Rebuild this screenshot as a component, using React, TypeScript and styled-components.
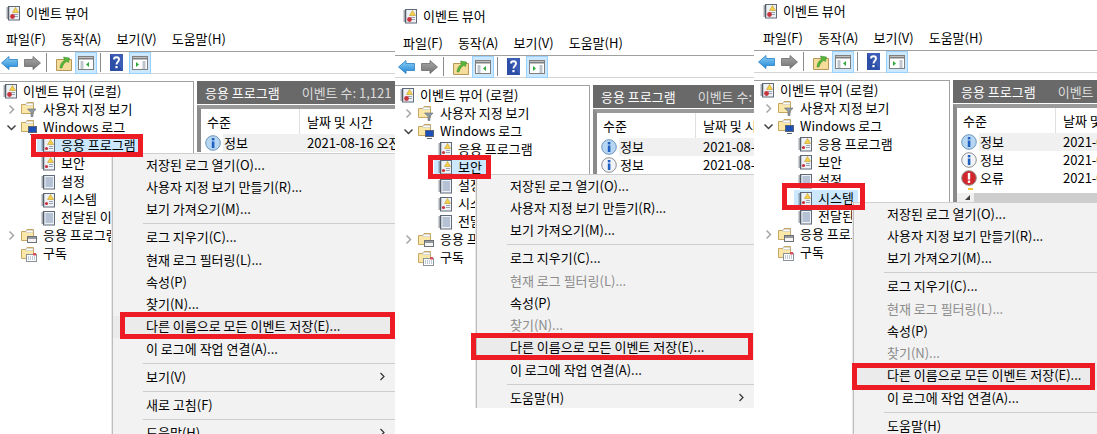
import styled, { createGlobalStyle } from 'styled-components'

const GlobalStyle = createGlobalStyle`
  html, body {
    margin: 0;
    padding: 0;
    background: #fff;
    color: #000;
    font-family: "Noto Sans CJK KR", "Noto Sans", sans-serif;
    font-size: 13px;
  }
`

const Page = styled.div`
  display: flex;
  width: 1097px;
  height: 434px;
  overflow: hidden;
`

const Panel = styled.section<{ $width: number; $height: number }>`
  position: relative;
  flex: none;
  width: ${(p) => p.$width}px;
  height: ${(p) => p.$height}px;
  overflow: hidden;
  background: #fff;
`

const TitleBar = styled.div<{ $height: number; $shift: number; $inset: number }>`
  display: flex;
  align-items: center;
  gap: 5px;
  box-sizing: border-box;
  height: ${(p) => p.$height}px;
  padding-left: ${(p) => p.$inset + 3}px;
  padding-top: ${(p) => Math.max(p.$shift, 0)}px;
  padding-bottom: ${(p) => Math.max(-p.$shift, 0)}px;
  line-height: 16px;
`

const MenuBar = styled.div<{ $inset: number }>`
  display: flex;
  align-items: center;
  gap: 15px;
  height: 25px;
  padding-left: ${(p) => p.$inset + 4}px;
`

const Toolbar = styled.div<{ $inset: number; $gap: number }>`
  display: flex;
  align-items: center;
  box-sizing: border-box;
  height: 23px;
  margin-bottom: ${(p) => p.$gap}px;
  padding-left: ${(p) => p.$inset - 1}px;
  border-top: 1px solid #a0a0a0;
  border-bottom: 1px solid #d4d4d4;
`

const ToolDivider = styled.span<{ $left: number }>`
  width: 1px;
  height: 19px;
  margin-left: ${(p) => p.$left}px;
  background: #8c8c8c;
`

const ToolToggle = styled.span`
  display: flex;
  align-items: center;
  justify-content: center;
  box-sizing: border-box;
  width: 22px;
  height: 22px;
  margin: 0 3px;
  background: #cce8ff;
  border: 1px solid #99d1ff;
`

const Glyph = styled.svg<{ $left?: number; $right?: number }>`
  display: block;
  flex: none;
  margin-left: ${(p) => p.$left ?? 0}px;
  margin-right: ${(p) => p.$right ?? 0}px;
`

const Body = styled.div`
  display: flex;
  align-items: flex-start;
`

const TreePane = styled.div<{ $width: number; $inset: number; $gap: number }>`
  flex: none;
  box-sizing: border-box;
  width: ${(p) => p.$width}px;
  height: 360px;
  margin-right: ${(p) => p.$gap}px;
  padding-left: ${(p) => p.$inset}px;
  overflow: hidden;
  border-top: 1px solid #a0a0a0;
  border-right: 1px solid #a0a0a0;
`

const TreeRow = styled.div<{ $depth: number }>`
  display: flex;
  align-items: center;
  height: 18.1px;
  padding-left: ${(p) => [0, 18, 38][p.$depth]}px;
  white-space: nowrap;
`

const Expander = styled.span`
  display: flex;
  flex: none;
  width: 12px;
  margin-left: -14px;
  margin-right: 2px;
`

const TreeLabel = styled.span<{ $selected: boolean }>`
  display: flex;
  align-items: center;
  gap: 5px;
  height: 18px;
  margin-left: -3px;
  padding: 0 4px 0 3px;
  background: ${(p) => (p.$selected ? '#cce8ff' : 'transparent')};
`

const TreeText = styled.span`
  margin-top: -2px;
`

const ListPane = styled.div`
  flex: 1;
  min-width: 0;
  overflow: hidden;
`

const PaneHeader = styled.div`
  display: flex;
  gap: 22px;
  align-items: center;
  height: 23px;
  margin-bottom: 1px;
  padding-left: 8px;
  background: #696969;
  color: #fff;
  white-space: nowrap;
`

const EventCount = styled.span`
  color: #dcdcdc;
`

const ListFrame = styled.div`
  border-top: 4px solid #9a9a9a;
  border-left: 4px solid #8a8a8a;
  background: #fff;
`

const ListColumns = styled.div`
  display: grid;
  grid-template-columns: 99px 1fr;
  white-space: nowrap;
  overflow: hidden;
`

const HeadCell = styled.div<{ $first?: boolean }>`
  display: flex;
  align-items: center;
  height: 25px;
  padding-left: ${(p) => (p.$first ? 6 : 7)}px;
  box-sizing: border-box;
  border-right: ${(p) => (p.$first ? '1px solid #e0e0e0' : 'none')};
`

const LevelCell = styled.div`
  display: flex;
  align-items: center;
  gap: 2px;
  height: 18.2px;
  padding-left: 4px;
`

const LevelText = styled.span<{ $selected: boolean }>`
  flex: 1;
  padding-left: 1px;
  line-height: 18px;
  background: ${(p) => (p.$selected ? '#f0f0f0' : 'transparent')};
`

const DateCell = styled.div<{ $selected: boolean }>`
  height: 18.2px;
  padding-left: 7px;
  line-height: 18px;
  background: ${(p) => (p.$selected ? '#f0f0f0' : 'transparent')};
`

const PartialRow = styled.div`
  height: 5px;
`

const RowSpeck = styled.span`
  display: block;
  width: 5px;
  height: 2px;
  margin-left: 11px;
  background: #f2c230;
`

const ScrollTrack = styled.div`
  display: flex;
  align-items: center;
  height: 9px;
  padding-left: 7px;
  background: linear-gradient(to right, #f0f0f0 17px, #cdcdcd 17px);
`

const ContextMenu = styled.div<{ $x: number; $y: number; $width: number }>`
  position: absolute;
  left: ${(p) => p.$x}px;
  top: ${(p) => p.$y}px;
  box-sizing: border-box;
  width: ${(p) => p.$width}px;
  background: #f2f2f2;
  border-left: 1px solid #bdbdbd;
  border-top: 1px solid #cfcfcf;
  box-shadow: -1px 0 0 #e8e8e8;
`

const MenuRow = styled.div<{ $disabled?: boolean; $hot?: boolean }>`
  display: flex;
  align-items: center;
  justify-content: space-between;
  box-sizing: border-box;
  height: 22.25px;
  padding: 0 9px 2px 33px;
  color: ${(p) => (p.$disabled ? '#8c8c8c' : '#000')};
  background: ${(p) => (p.$hot ? '#ebebeb' : 'transparent')};
  white-space: nowrap;
`

const MenuSeparator = styled.div`
  height: 1px;
  margin: 2.5px 0 2.5px 30px;
  background: #cdcdcd;
`

const RedBox = styled.div<{ $x: number; $y: number; $w: number; $h: number }>`
  position: absolute;
  left: ${(p) => p.$x}px;
  top: ${(p) => p.$y}px;
  box-sizing: border-box;
  width: ${(p) => p.$w}px;
  height: ${(p) => p.$h}px;
  border: 5px solid #ed1c24;
`

/* icons */

const LogIcon = ({ alert = true, root = false }: { alert?: boolean; root?: boolean }) => (
  <Glyph width="16" height="16" viewBox="0 0 16 16">
    <rect x="3.5" y="1.5" width="11" height="13.5" fill="#eef1f6" stroke="#5f6977" />
    {[3, 5, 7, 9, 11, 13].map((y) => (
      <path key={y} d={`M1.5 ${y}H4.5`} stroke="#48525f" strokeWidth="1" />
    ))}
    {alert ? (
      <>
        <path d="M10.5 2.5L13.5 7.5H7.5Z" fill="#f6d24a" stroke="#bd9a2a" strokeWidth="0.6" />
        <path d="M9 9.5H13M9 11.5H13" stroke="#99a4b2" />
        <circle cx={root ? 7.5 : 6.5} cy="11.5" r={root ? 2.4 : 1.6} fill="#c8343c" />
      </>
    ) : (
      <path d="M5.5 4H13M5.5 6H13M5.5 8H13M5.5 10H13M5.5 12H13" stroke="#7d93b3" />
    )}
  </Glyph>
)

const Folder = ({ badge }: { badge: 'filter' | 'monitor' | 'window' | 'calendar' }) => (
  <Glyph width="18" height="16" viewBox="0 0 18 16">
    <path d="M1.5 3.5H6L7 1.5H13.5V12.5H1.5Z" fill="#fbe7a8" stroke="#c6a660" />
    <rect x="6" y="2.5" width="7" height="2" fill="#fff" stroke="#b8bcc2" strokeWidth="0.5" />
    {badge === 'filter' && <path d="M7.5 8H16L13 11.5V15.5H11V11.5Z" fill="#8f9aa6" stroke="#626c77" strokeWidth="0.6" />}
    {badge === 'monitor' && (
      <>
        <rect x="8.5" y="7.5" width="8" height="6" fill="#1d4fb8" stroke="#5a6473" />
        <path d="M10 15.5H15" stroke="#5a6473" />
      </>
    )}
    {badge === 'window' && (
      <>
        <rect x="7.5" y="8.5" width="9" height="6" fill="#f4f4f4" stroke="#6c7178" />
        <path d="M7.5 10H16.5" stroke="#6c7178" strokeWidth="1.4" />
      </>
    )}
    {badge === 'calendar' && (
      <>
        <rect x="6.5" y="8.5" width="10" height="7" fill="#fff" stroke="#8a929c" />
        <path d="M8 11H15M8 13H15" stroke="#7f94b0" strokeDasharray="1 1" />
        <rect x="13" y="7" width="3" height="2.5" fill="#d8505a" />
      </>
    )}
  </Glyph>
)

const Chevron = ({ open }: { open: boolean }) => (
  <svg width="11" height="11" viewBox="0 0 11 11">
    {open ? (
      <path d="M1.5 3.5L5.5 7.5L9.5 3.5" fill="none" stroke="#404040" strokeWidth="1.5" />
    ) : (
      <path d="M3.5 1.5L7.5 5.5L3.5 9.5" fill="none" stroke="#a6a6a6" strokeWidth="1.5" />
    )}
  </svg>
)

const NavArrow = ({ back, left }: { back: boolean; left?: number }) => (
  <Glyph width="17" height="16" viewBox="0 0 17 16" $left={left}>
    <defs>
      <linearGradient id="navBlue" x1="0" y1="0" x2="0" y2="1">
        <stop offset="0" stopColor="#8fd0f5" />
        <stop offset="1" stopColor="#1f86d6" />
      </linearGradient>
      <linearGradient id="navGrey" x1="0" y1="0" x2="0" y2="1">
        <stop offset="0" stopColor="#a8a8a8" />
        <stop offset="1" stopColor="#737373" />
      </linearGradient>
    </defs>
    {back ? (
      <path d="M0.5 8L8 1.5V4.5H16.5V11.5H8V14.5Z" fill="url(#navBlue)" stroke="#2a7fc4" strokeWidth="0.8" />
    ) : (
      <path d="M16.5 8L9 1.5V4.5H0.5V11.5H9V14.5Z" fill="url(#navGrey)" stroke="#6b6b6b" strokeWidth="0.8" />
    )}
  </Glyph>
)

const FolderUp = () => (
  <Glyph width="16" height="18" viewBox="0 0 16 18" $left={9}>
    <path d="M0.5 5.5H15.5V16.5H0.5Z" fill="#f6dc9a" stroke="#b5975a" />
    <path d="M4 14C4.5 9.5 6 7.5 8.5 6.5L7.5 3L13.5 4L12.5 8.5L10.8 7.4C8.5 8.5 7 10.5 6 14Z" fill="#58b53c" stroke="#3c8a26" strokeWidth="0.5" />
  </Glyph>
)

const HelpIcon = () => (
  <Glyph width="13" height="17" viewBox="0 0 13 17" $left={9} $right={3}>
    <rect width="13" height="17" fill="#2c4ea6" />
    <path d="M0 0H13V17Z" fill="#4a6cc6" opacity="0.5" />
    <path d="M4 5.5C4 2.5 9 2.5 9 5.5C9 8 6.5 7.8 6.5 10.5" fill="none" stroke="#fff" strokeWidth="1.9" />
    <rect x="5.4" y="12" width="2.2" height="2.2" fill="#fff" />
  </Glyph>
)

const PaneIcon = ({ left }: { left: boolean }) => (
  <svg width="16" height="14" viewBox="0 0 16 14">
    <rect x="0.5" y="0.5" width="15" height="13" fill="#fff" stroke="#7f7f7f" />
    <path d="M1 2.5H15" stroke="#7f7f7f" strokeWidth="2" />
    {left ? (
      <>
        <path d="M2.5 6H5.5M2.5 8H5.5M2.5 10H5.5M2.5 12H5.5" stroke="#7f8b9a" />
        <path d="M11 6V11L8 8.5Z" fill="#2fa83a" />
      </>
    ) : (
      <>
        <path d="M10.5 6H13.5M10.5 8H13.5M10.5 10H13.5M10.5 12H13.5" stroke="#7f8b9a" />
        <path d="M4 6V11L7 8.5Z" fill="#2fa83a" />
      </>
    )}
  </svg>
)

const LevelIcon = ({ kind }: { kind: 'infoSel' | 'info' | 'error' }) => {
  if (kind === 'error') {
    return (
      <Glyph width="16" height="16" viewBox="0 0 16 16">
        <circle cx="8" cy="8" r="7.3" fill="#d0262c" stroke="#8f8f8f" />
        <rect x="6.8" y="3" width="2.4" height="6.5" fill="#fff" />
        <rect x="6.8" y="10.5" width="2.4" height="2.4" fill="#fff" />
      </Glyph>
    )
  }
  return (
    <Glyph width="16" height="16" viewBox="0 0 16 16">
      <circle
        cx="8"
        cy="8"
        r="7.3"
        fill={kind === 'infoSel' ? '#b6d6f2' : '#f0f3f7'}
        stroke={kind === 'infoSel' ? '#6f96bd' : '#8f8f8f'}
      />
      <rect x="6.8" y="6.5" width="2.6" height="6.5" fill="#1f5fc0" />
      <rect x="6.8" y="3" width="2.6" height="2.4" fill="#1f5fc0" />
    </Glyph>
  )
}

/* data */

type TreeItem = {
  label: string
  depth: number
  kind: 'root' | 'log' | 'plain' | 'filter' | 'monitor' | 'window' | 'calendar'
  chevron?: 'open' | 'closed'
}

const treeItems: TreeItem[] = [
  { label: '이벤트 뷰어 (로컬)', depth: 0, kind: 'root' },
  { label: '사용자 지정 보기', depth: 1, kind: 'filter', chevron: 'closed' },
  { label: 'Windows 로그', depth: 1, kind: 'monitor', chevron: 'open' },
  { label: '응용 프로그램', depth: 2, kind: 'log' },
  { label: '보안', depth: 2, kind: 'log' },
  { label: '설정', depth: 2, kind: 'plain' },
  { label: '시스템', depth: 2, kind: 'log' },
  { label: '전달된 이벤트', depth: 2, kind: 'plain' },
  { label: '응용 프로그램 및 서비스 로그', depth: 1, kind: 'window', chevron: 'closed' },
  { label: '구독', depth: 1, kind: 'calendar' },
]

type MenuEntry = { label: string; disabled?: boolean; hot?: boolean; arrow?: boolean } | 'sep'

const menuEntries = (limited: boolean, tail: MenuEntry[]): MenuEntry[] => [
  { label: '저장된 로그 열기(O)...' },
  { label: '사용자 지정 보기 만들기(R)...' },
  { label: '보기 가져오기(M)...' },
  'sep',
  { label: '로그 지우기(C)...' },
  { label: '현재 로그 필터링(L)...', disabled: limited },
  { label: '속성(P)' },
  { label: '찾기(N)...', disabled: limited },
  { label: '다른 이름으로 모든 이벤트 저장(E)...', hot: true },
  { label: '이 로그에 작업 연결(A)...' },
  'sep',
  ...tail,
]

type Rect = { x: number; y: number; w: number; h: number }

type PanelConfig = {
  width: number
  height: number
  inset: number
  titleHeight: number
  titleShift: number
  toolGap: number
  treeWidth: number
  paneGap: number
  selected: number
  rows: ('infoSel' | 'info' | 'error')[]
  labels: string[]
  scroll?: boolean
  menu: { x: number; y: number; width: number; entries: MenuEntry[] }
  boxes: Rect[]
}

const panels: PanelConfig[] = [
  {
    width: 395,
    height: 434,
    inset: 2,
    titleHeight: 26,
    titleShift: 0,
    toolGap: 7,
    treeWidth: 194,
    paneGap: 3,
    selected: 3,
    rows: ['infoSel'],
    labels: ['정보'],
    menu: {
      x: 112,
      y: 153,
      width: 283,
      entries: menuEntries(false, [
        { label: '보기(V)', arrow: true },
        'sep',
        { label: '새로 고침(F)' },
        'sep',
        { label: '도움말(H)', arrow: true },
      ]),
    },
    boxes: [
      { x: 31, y: 134, w: 112, h: 23 },
      { x: 120, y: 312, w: 275, h: 27 },
    ],
  },
  {
    width: 359,
    height: 408,
    inset: 4,
    titleHeight: 30,
    titleShift: 2,
    toolGap: 7,
    treeWidth: 195,
    paneGap: 3,
    selected: 4,
    rows: ['infoSel', 'info'],
    labels: ['정보', '정보'],
    menu: {
      x: 81,
      y: 174,
      width: 278,
      entries: menuEntries(true, [{ label: '도움말(H)', arrow: true }]),
    },
    boxes: [
      { x: 33, y: 155, w: 63, h: 24 },
      { x: 76, y: 333, w: 282, h: 27 },
    ],
  },
  {
    width: 343,
    height: 434,
    inset: 5,
    titleHeight: 25,
    titleShift: -3,
    toolGap: 7,
    treeWidth: 196,
    paneGap: 3,
    selected: 6,
    rows: ['infoSel', 'info', 'error'],
    labels: ['정보', '정보', '오류'],
    scroll: true,
    menu: {
      x: 99,
      y: 202,
      width: 270,
      entries: menuEntries(true, [{ label: '도움말(H)' }]),
    },
    boxes: [
      { x: 28, y: 183, w: 83, h: 27 },
      { x: 98, y: 363, w: 243, h: 27 },
    ],
  },
]

const TreeNodeIcon = ({ kind }: { kind: TreeItem['kind'] }) => {
  if (kind === 'root') return <LogIcon root />
  if (kind === 'log') return <LogIcon />
  if (kind === 'plain') return <LogIcon alert={false} />
  return <Folder badge={kind} />
}

const LevelRow = ({ kind, label }: { kind: 'infoSel' | 'info' | 'error'; label: string }) => (
  <>
    <LevelCell>
      <LevelIcon kind={kind} />
      <LevelText $selected={kind === 'infoSel'}>{label}</LevelText>
    </LevelCell>
    <DateCell $selected={kind === 'infoSel'}>2021-08-16 오전 10:23:41</DateCell>
  </>
)

const ViewerPanel = ({ config }: { config: PanelConfig }) => (
  <Panel $width={config.width} $height={config.height}>
    <TitleBar $height={config.titleHeight} $shift={config.titleShift} $inset={config.inset}>
      <LogIcon root />
      <span>이벤트 뷰어</span>
    </TitleBar>
    <MenuBar $inset={config.inset}>
      <span>파일(F)</span>
      <span>동작(A)</span>
      <span>보기(V)</span>
      <span>도움말(H)</span>
    </MenuBar>
    <Toolbar $inset={config.inset} $gap={config.toolGap}>
      <NavArrow back />
      <NavArrow back={false} left={6} />
      <ToolDivider $left={5} />
      <FolderUp />
      <ToolToggle>
        <PaneIcon left />
      </ToolToggle>
      <ToolDivider $left={0} />
      <HelpIcon />
      <ToolToggle>
        <PaneIcon left={false} />
      </ToolToggle>
    </Toolbar>
    <Body>
      <TreePane $width={config.treeWidth} $inset={config.inset} $gap={config.paneGap}>
        {treeItems.map((item, i) => (
          <TreeRow key={item.label} $depth={item.depth}>
            {item.chevron && (
              <Expander>
                <Chevron open={item.chevron === 'open'} />
              </Expander>
            )}
            <TreeLabel $selected={i === config.selected}>
              <TreeNodeIcon kind={item.kind} />
              <TreeText>{item.label}</TreeText>
            </TreeLabel>
          </TreeRow>
        ))}
      </TreePane>
      <ListPane>
        <PaneHeader>
          <span>응용 프로그램</span>
          <EventCount>이벤트 수: 1,121</EventCount>
        </PaneHeader>
        <ListFrame>
          <ListColumns>
            <HeadCell $first>수준</HeadCell>
            <HeadCell>날짜 및 시간</HeadCell>
            {config.rows.map((kind, i) => (
              <LevelRow key={i} kind={kind} label={config.labels[i]} />
            ))}
          </ListColumns>
          {config.scroll && (
            <>
              <PartialRow>
                <RowSpeck />
              </PartialRow>
              <ScrollTrack>
                <svg width="8" height="8" viewBox="0 0 8 8">
                  <path d="M1 7L6 2V7Z" fill="#404040" />
                </svg>
              </ScrollTrack>
            </>
          )}
        </ListFrame>
      </ListPane>
    </Body>
    <ContextMenu $x={config.menu.x} $y={config.menu.y} $width={config.menu.width}>
      {config.menu.entries.map((entry, i) =>
        entry === 'sep' ? (
          <MenuSeparator key={i} />
        ) : (
          <MenuRow key={i} $disabled={entry.disabled} $hot={entry.hot}>
            <span>{entry.label}</span>
            {entry.arrow && (
              <svg width="7" height="9" viewBox="0 0 7 9">
                <path d="M1.5 1L5 4.5L1.5 8" fill="none" stroke="#333" strokeWidth="1.2" />
              </svg>
            )}
          </MenuRow>
        ),
      )}
    </ContextMenu>
    {config.boxes.map((box) => (
      <RedBox key={box.x} $x={box.x} $y={box.y} $w={box.w} $h={box.h} />
    ))}
  </Panel>
)

const App = () => (
  <Page>
    <GlobalStyle />
    {panels.map((config) => (
      <ViewerPanel key={config.selected} config={config} />
    ))}
  </Page>
)

export default App
